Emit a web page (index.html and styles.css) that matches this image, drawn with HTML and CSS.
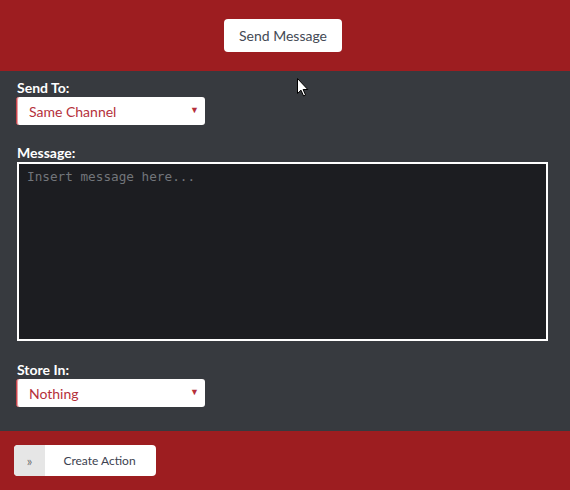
FILE: index.html
```html
<!DOCTYPE html>
<html>
<head>
<meta charset="utf-8">
<link rel="stylesheet" href="styles.css">
</head>
<body>
<div class="page">
  <header class="topbar">
    <button class="btn-send">Send Message</button>
  </header>
  <main class="form">
    <div class="field">
      <label class="label">Send To:</label>
      <div class="select"><span>Same Channel</span><span class="arrow">&#9660;</span></div>
    </div>
    <div class="field field-msg">
      <label class="label">Message:</label>
      <div class="textarea"><span class="placeholder">Insert message here...</span></div>
    </div>
    <div class="field field-store">
      <label class="label">Store In:</label>
      <div class="select"><span>Nothing</span><span class="arrow">&#9660;</span></div>
    </div>
  </main>
  <footer class="bottombar">
    <button class="btn-create"><span class="chev">&raquo;</span><span class="btn-text">Create Action</span></button>
  </footer>
  <svg class="cursor" width="12" height="19" viewBox="0 0 12 19"><path d="M0.5 0.5 L0.5 15.5 L4 12.2 L6.6 18 L8.6 17.1 L6.1 11.5 L10.8 11.5 Z" fill="#fff" stroke="#000" stroke-width="1"/></svg>
</div>
</body>
</html>
```
FILE: styles.css
```css
* { box-sizing: border-box; }
html, body { margin: 0; padding: 0; }
body { font-family: Lato, "Open Sans", sans-serif; background: #373a3f; }
.page { width: 570px; height: 490px; position: relative; display: flex; flex-direction: column; overflow: hidden; }
.topbar { height: 71px; background: #9d1d20; display: flex; justify-content: center; padding: 19px 4px 0 0; }
.btn-send { width: 118px; height: 33px; background: #fff; border: none; border-radius: 4px; font-family: Lato, sans-serif; font-size: 14px; color: #444a55; padding: 0; }
.form { flex: 1; background: #373a3f; padding: 9px 0 0 16px; display: flex; flex-direction: column; }
.field { display: flex; flex-direction: column; }
.label { color: #fff; font-weight: bold; font-size: 14px; line-height: 16px; height: 17px; padding-left: 1px; }
.select { width: 189px; height: 28px; background: #fff; border-radius: 3px; border-left: 1px solid #c9444b; box-shadow: inset 1px 0 0 #e8a0a4; display: flex; align-items: center; justify-content: space-between; padding: 0 6px 0 12px; color: #b5303b; font-size: 14px; }
.arrow { font-size: 9px; color: #b5303b; margin-top: -3px; }
.field-msg { margin-top: 20px; }
.textarea { margin-left: 1px; width: 531px; height: 179px; background: #1c1d21; border: 2px solid #fff; padding: 1px 8px; }
.placeholder { font-family: "DejaVu Sans Mono", "Liberation Mono", monospace; font-size: 12.7px; color: #72757a; }
.field-store { margin-top: 21px; }
.bottombar { height: 59px; background: #9d1d20; padding: 14px 0 0 14px; }
.btn-create { width: 142px; height: 31px; border: none; border-radius: 4px; background: #fff; padding: 0; display: flex; overflow: hidden; font-family: Lato, sans-serif; }
.chev { width: 31px; height: 100%; background: #e6e6e6; color: #777; display: flex; align-items: center; justify-content: center; font-size: 13px; }
.btn-text { flex: 1; display: flex; align-items: center; justify-content: center; font-size: 12px; color: #3c4250; padding-right: 2px; }
.cursor { position: absolute; left: 297px; top: 78px; }
```
